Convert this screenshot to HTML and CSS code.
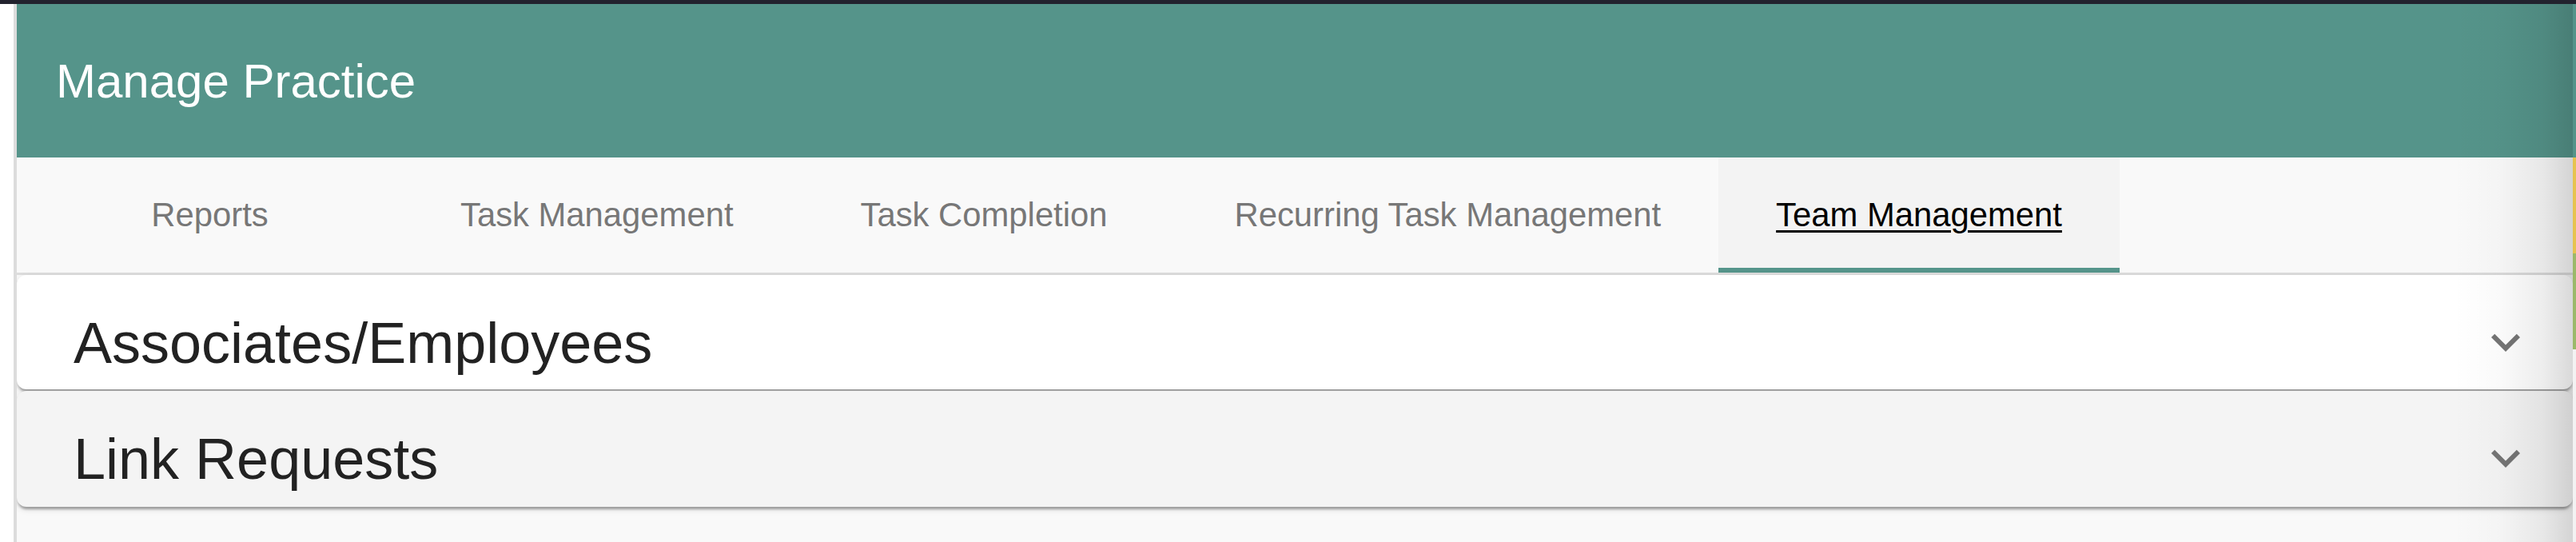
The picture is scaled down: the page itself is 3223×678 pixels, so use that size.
FILE: index.html
```html
<!DOCTYPE html>
<html lang="en">
<head>
<meta charset="utf-8">
<title>Manage Practice</title>
<link rel="stylesheet" href="styles.css">
</head>
<body>
<div class="topbar"></div>
<div class="layout">
  <div class="gutter"></div>
  <main class="main">
    <header class="header">
      <h1 class="title">Manage Practice</h1>
    </header>
    <nav class="tabs">
      <div class="tab">Reports</div>
      <div class="tab">Task Management</div>
      <div class="tab">Task Completion</div>
      <div class="tab">Recurring Task Management</div>
      <div class="tab tab-active"><span class="tab-label">Team Management</span></div>
    </nav>
    <section class="panels">
      <div class="panel panel-white">
        <div class="summary">
          <span class="summary-text">Associates/Employees</span>
          <svg class="chevron" viewBox="0 0 24 24" aria-hidden="true"><path d="M16.59 8.59L12 13.17 7.41 8.59 6 10l6 6 6-6z"/></svg>
        </div>
      </div>
      <div class="panel panel-grey">
        <div class="summary">
          <span class="summary-text">Link Requests</span>
          <svg class="chevron" viewBox="0 0 24 24" aria-hidden="true"><path d="M16.59 8.59L12 13.17 7.41 8.59 6 10l6 6 6-6z"/></svg>
        </div>
      </div>
    </section>
    <div class="edge-shade"></div>
  </main>
  <div class="strip">
    <div class="strip-seg strip-green"></div>
    <div class="strip-seg strip-yellow"></div>
    <div class="strip-seg strip-lime"></div>
  </div>
</div>
</body>
</html>
```

FILE: styles.css
```css
* {
  box-sizing: border-box;
}

html, body {
  margin: 0;
  padding: 0;
  background: #ffffff;
  font-family: "Liberation Sans", Arial, Helvetica, sans-serif;
  overflow: hidden;
}

.topbar {
  height: 5px;
  background: #22222e;
}

.layout {
  display: flex;
  min-height: 673px;
}

.gutter {
  width: 17px;
  flex: none;
  background: #ffffff;
}

.main {
  position: relative;
  flex: 1;
  min-width: 0;
  border-left: 4px solid #dcdcdc;
  background: #f9f9f9;
  overflow: hidden;
}

.header {
  height: 192px;
  background: #55948a;
  display: flex;
  align-items: center;
  padding-left: 49px;
}

.title {
  margin: 0;
  font-size: 60px;
  font-weight: 400;
  color: #ffffff;
  line-height: 1.2;
  padding-top: 2px;
}

.tabs {
  display: flex;
  height: 147px;
  background: #f9f9f9;
  border-bottom: 3px solid #dddddd;
}

.tab {
  min-width: 483px;
  height: 144px;
  padding: 0 72px;
  display: flex;
  align-items: center;
  justify-content: center;
  font-size: 41.8px;
  color: #777777;
  white-space: nowrap;
}

.tab-active {
  background: #f3f3f3;
  color: #000000;
  box-shadow: inset 0 -6px 0 #55948a;
}

.tab-label {
  text-decoration: underline;
  text-decoration-thickness: 3px;
  text-underline-offset: 5px;
}

.panels {
  display: flex;
  flex-direction: column;
  gap: 2px;
}

.panel {
  border-radius: 12px;
  box-shadow: 0 6px 3px -3px rgba(0, 0, 0, 0.2),
              0 3px 3px 0 rgba(0, 0, 0, 0.14),
              0 3px 9px 0 rgba(0, 0, 0, 0.12);
}

.panel-white {
  background: #ffffff;
  height: 143px;
}

.panel-grey {
  background: #f4f4f4;
  height: 145px;
}

.summary {
  display: flex;
  align-items: center;
  justify-content: space-between;
  height: 120px;
  margin-top: 24px;
  padding: 0 48px 0 71px;
}

.summary-text {
  font-size: 72px;
  line-height: 1.2;
  color: #222222;
  padding-top: 2px;
}

.chevron {
  width: 72px;
  height: 72px;
  fill: #757575;
  flex: none;
}

.edge-shade {
  position: absolute;
  top: 0;
  right: 0;
  bottom: 0;
  width: 150px;
  pointer-events: none;
  background: linear-gradient(to right,
    rgba(0, 0, 0, 0) 0%,
    rgba(0, 0, 0, 0.02) 40%,
    rgba(0, 0, 0, 0.07) 75%,
    rgba(0, 0, 0, 0.15) 100%);
}

.strip {
  width: 4px;
  flex: none;
  display: flex;
  flex-direction: column;
  background: #f2f2f2;
}

.strip-seg {
  width: 100%;
}

.strip-green {
  height: 192px;
  background: #55948a;
}

.strip-yellow {
  height: 120px;
  background: #e6c350;
}

.strip-lime {
  height: 120px;
  background: #9bb96a;
}
```
